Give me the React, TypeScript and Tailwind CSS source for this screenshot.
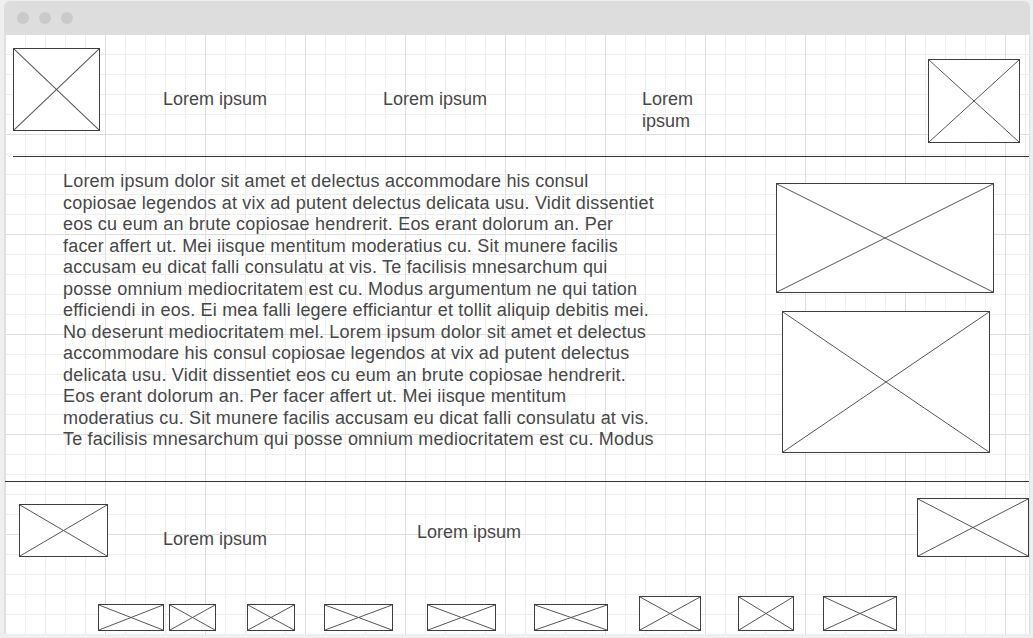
import React from "react";

function XBox({ className }: { className: string }) {
  return (
    <div className={"relative shrink-0 bg-white border border-[#3d3d3d] " + className}>
      <svg className="absolute inset-0 w-full h-full" viewBox="0 0 100 100" preserveAspectRatio="none">
        <line x1="0" y1="0" x2="100" y2="100" stroke="#555555" strokeWidth="1" vectorEffect="non-scaling-stroke" />
        <line x1="100" y1="0" x2="0" y2="100" stroke="#555555" strokeWidth="1" vectorEffect="non-scaling-stroke" />
      </svg>
    </div>
  );
}

const bodyLines = [
  "Lorem ipsum dolor sit amet et delectus accommodare his consul",
  "copiosae legendos at vix ad putent delectus delicata usu. Vidit dissentiet",
  "eos cu eum an brute copiosae hendrerit. Eos erant dolorum an. Per",
  "facer affert ut. Mei iisque mentitum moderatius cu. Sit munere facilis",
  "accusam eu dicat falli consulatu at vis. Te facilisis mnesarchum qui",
  "posse omnium mediocritatem est cu. Modus argumentum ne qui tation",
  "efficiendi in eos. Ei mea falli legere efficiantur et tollit aliquip debitis mei.",
  "No deserunt mediocritatem mel. Lorem ipsum dolor sit amet et delectus",
  "accommodare his consul copiosae legendos at vix ad putent delectus",
  "delicata usu. Vidit dissentiet eos cu eum an brute copiosae hendrerit.",
  "Eos erant dolorum an. Per facer affert ut. Mei iisque mentitum",
  "moderatius cu. Sit munere facilis accusam eu dicat falli consulatu at vis.",
  "Te facilisis mnesarchum qui posse omnium mediocritatem est cu. Modus",
];

export default function App() {
  return (
    <div className="w-[1033px] h-[638px] bg-[#efefef] overflow-hidden pt-[1px] pl-[4px] font-['Liberation_Sans',Arial,sans-serif] text-[18px] leading-[21.6px] text-[#474747]">
      <div className="w-[1026px]">
        {/* title bar */}
        <div className="h-[33px] rounded-t-[6px] bg-[#dddddd] flex items-center gap-[10px] pl-[13px]">
          <div className="w-[12px] h-[12px] rounded-full bg-[#cacaca]" />
          <div className="w-[12px] h-[12px] rounded-full bg-[#cacaca]" />
          <div className="w-[12px] h-[12px] rounded-full bg-[#cacaca]" />
        </div>
        {/* canvas */}
        <div className="h-[600px] border-l border-r border-[#e2e2e2] bg-white flex flex-col [background-image:linear-gradient(to_right,#dedede_1px,transparent_1px),linear-gradient(to_bottom,#dedede_1px,transparent_1px),linear-gradient(to_right,#eeeeee_1px,transparent_1px),linear-gradient(to_bottom,#eeeeee_1px,transparent_1px)] [background-size:100px_100px,100px_100px,20px_20px,20px_20px]">
          {/* header */}
          <div className="h-[122px] flex items-start">
            <XBox className="ml-[8px] mt-[14px] w-[87px] h-[83px]" />
            <div className="ml-[63px] mt-[55px] w-[220px] shrink-0">Lorem ipsum</div>
            <div className="mt-[55px] w-[259px] shrink-0">Lorem ipsum</div>
            <div className="mt-[55px] w-[60px] shrink-0">Lorem ipsum</div>
            <XBox className="ml-auto mr-[9px] mt-[25px] w-[92px] h-[84px]" />
          </div>
          <div className="h-px ml-[8px] bg-[#333333]" />
          {/* body */}
          <div className="h-[324px] flex items-start">
            <div className="ml-[58px] mt-[14px] w-[600px] shrink-0 leading-[21.5px] tracking-[0.2px]">
              {bodyLines.map((l, i) => (
                <div key={i} className="whitespace-nowrap">
                  {l}
                </div>
              ))}
            </div>
            <div className="ml-[113px] mt-[26px] flex flex-col">
              <XBox className="w-[218px] h-[110px]" />
              <XBox className="ml-[6px] mt-[18px] w-[208px] h-[142px]" />
            </div>
          </div>
          <div className="h-px bg-[#333333]" />
          {/* footer */}
          <div className="flex-1 flex flex-col">
            <div className="flex items-start">
              <XBox className="ml-[14px] mt-[22px] w-[89px] h-[53px]" />
              <div className="ml-[55px] mt-[47px] shrink-0">Lorem ipsum</div>
              <div className="ml-[150px] mt-[40px] shrink-0">Lorem ipsum</div>
              <XBox className="ml-auto mt-[16px] w-[112px] h-[59px]" />
            </div>
            <div className="mt-auto pb-[3px] flex items-end">
              <XBox className="ml-[93px] w-[66px] h-[27px]" />
              <XBox className="ml-[5px] w-[47px] h-[27px]" />
              <XBox className="ml-[31px] w-[48px] h-[27px]" />
              <XBox className="ml-[29px] w-[69px] h-[27px]" />
              <XBox className="ml-[34px] w-[69px] h-[27px]" />
              <XBox className="ml-[38px] w-[74px] h-[27px]" />
              <XBox className="ml-[31px] w-[62px] h-[35px]" />
              <XBox className="ml-[37px] w-[56px] h-[35px]" />
              <XBox className="ml-[29px] w-[74px] h-[35px]" />
            </div>
          </div>
        </div>
      </div>
    </div>
  );
}
